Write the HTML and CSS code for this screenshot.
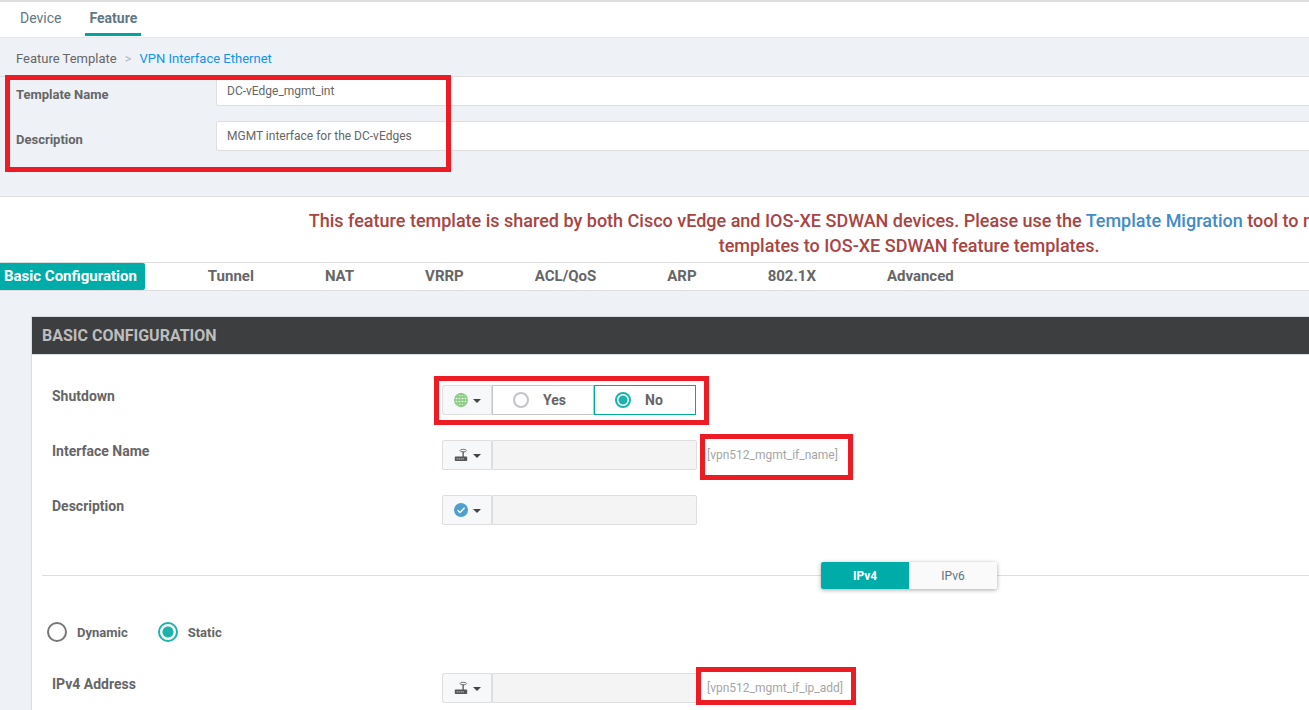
FILE: index.html
```html
<!DOCTYPE html>
<html lang="en">
<head>
<meta charset="utf-8">
<title>Feature Template - VPN Interface Ethernet</title>
<link rel="stylesheet" href="styles.css">
</head>
<body>
<svg class="sprite" aria-hidden="true">
  <symbol id="globe" viewBox="0 0 16 16"><g fill="none" stroke="currentColor" stroke-width="1.5"><circle cx="8" cy="8" r="7.2"/><ellipse cx="8" cy="8" rx="3.6" ry="7"/><path d="M8 1v14M1 8h14M2 4.6h12M2 11.4h12"/></g></symbol>
  <symbol id="router" viewBox="0 0 14 14"><path fill="currentColor" d="M1.600 8.500h6.900V3.500h1.300v5h2.600q.8 0 .8.8v3q0 .7-.8.7H1.600q-.8 0-.8-.7v-3q0-.8.8-.8z"/><ellipse cx="9.200" cy="2.600" rx="3.200" ry="1.300" fill="none" stroke="currentColor" stroke-width=".8"/><path stroke="#f8f9fa" stroke-width=".8" d="M2.600 10.900h1.200M4.600 10.900h1.200M6.600 10.900h1.200M8.600 10.900h1.200"/></symbol>
  <symbol id="check" viewBox="0 0 14 14"><circle cx="7" cy="7" r="7" fill="currentColor"/><path d="M3.600 7.200l2.400 2.300 4.600-4.800" fill="none" stroke="#fff" stroke-width="1.300"/></symbol>
</svg>
<div class="page">
  <nav class="top-tabs">
    <a class="top-tab" href="#device">Device</a>
    <a class="top-tab active" href="#feature">Feature</a>
  </nav>
  <nav class="breadcrumb">
    <a href="#templates">Feature Template</a><span class="sep">&gt;</span><a class="current" href="#vpn">VPN Interface Ethernet</a>
  </nav>
  <section class="details">
    <div class="detail-row"><label for="tname">Template Name</label><input id="tname" type="text" value="DC-vEdge_mgmt_int"></div>
    <div class="detail-row"><label for="tdesc">Description</label><input id="tdesc" type="text" value="MGMT interface for the DC-vEdges"></div>
    <div class="mark mark-details"></div>
  </section>
  <p class="notice">This feature template is shared by both Cisco vEdge and IOS-XE SDWAN devices. Please use the <a href="#migration">Template Migration</a> tool to migrate all shared feature<br>templates to IOS-XE SDWAN feature templates.</p>
  <nav class="section-tabs">
    <a class="active" href="#basic">Basic Configuration</a>
    <a href="#tunnel">Tunnel</a>
    <a href="#nat">NAT</a>
    <a href="#vrrp">VRRP</a>
    <a href="#acl">ACL/QoS</a>
    <a href="#arp">ARP</a>
    <a href="#dot1x">802.1X</a>
    <a href="#advanced">Advanced</a>
  </nav>
  <section class="panel" id="basic">
    <h2>BASIC CONFIGURATION</h2>
    <div class="row">
      <span class="row-label" id="shutdown">Shutdown</span>
      <div class="control" role="radiogroup" aria-labelledby="shutdown">
        <button class="scope green" type="button" aria-label="Shutdown scope"><svg><use href="#globe"/></svg><i class="caret"></i></button>
        <label class="option"><input type="radio" name="shutdown">Yes</label>
        <label class="option chosen"><input type="radio" name="shutdown" checked>No</label>
        <div class="mark mark-shutdown"></div>
      </div>
    </div>
    <div class="row">
      <label class="row-label" for="ifname">Interface Name</label>
      <div class="control">
        <button class="scope" type="button" aria-label="Interface name scope"><svg><use href="#router"/></svg><i class="caret"></i></button>
        <input class="field" id="ifname" type="text" disabled>
        <span class="variable">[vpn512_mgmt_if_name]</span>
        <div class="mark mark-name"></div>
      </div>
    </div>
    <div class="row">
      <label class="row-label" for="ifdesc">Description</label>
      <div class="control">
        <button class="scope blue" type="button" aria-label="Description scope"><svg><use href="#check"/></svg><i class="caret"></i></button>
        <input class="field" id="ifdesc" type="text" disabled>
      </div>
    </div>
    <div class="divider">
      <div class="ip-toggle"><button class="on" type="button">IPv4</button><button type="button">IPv6</button></div>
    </div>
    <div class="modes">
      <label><input type="radio" name="mode">Dynamic</label>
      <label><input type="radio" name="mode" checked>Static</label>
    </div>
    <div class="row">
      <label class="row-label" for="ipaddr">IPv4 Address</label>
      <div class="control">
        <button class="scope" type="button" aria-label="IPv4 address scope"><svg><use href="#router"/></svg><i class="caret"></i></button>
        <input class="field" id="ipaddr" type="text" disabled>
        <span class="variable">[vpn512_mgmt_if_ip_add]</span>
        <div class="mark mark-address"></div>
      </div>
    </div>
  </section>
</div>
</body>
</html>
```
FILE: styles.css
```css
* { box-sizing: border-box; }
html { overflow: hidden; }
body { margin: 0; background: #eef1f6; color: #666; font-family: Roboto, "Liberation Sans", sans-serif; font-size: 13px; }
a { color: inherit; text-decoration: none; }
button, input { font: inherit; color: inherit; margin: 0; }
.sprite { display: none; }

/* The form is wider than the window and runs off its right edge. */
.page { width: 138.9vw; }

.top-tabs { display: flex; gap: 20px; height: 38px; padding: 0 16px; background: #fff; border-top: 2px solid #dedede; border-bottom: 1px solid #e6e8eb; }
.top-tab { display: flex; height: 34px; padding: 0 4px; line-height: 33px; color: #5f7885; font-size: 14px; }
.top-tab.active { border-bottom: 3px solid #00a5a0; font-weight: 700; }

.breadcrumb { height: 38px; padding: 0 16px; line-height: 41px; }
.sep { margin: 0 8px; color: #b5b5b5; }
.current { color: #1094ed; }

.details { position: relative; height: 121px; border-top: 1px solid #dedede; border-bottom: 1px solid #dedede; }
.detail-row { display: flex; height: 45px; padding-left: 16px; }
.detail-row:first-child { margin-top: -1px; }
.detail-row label { width: 200px; line-height: 37px; font-weight: 700; }
.detail-row input { flex: 1; height: 30px; padding: 0 10px; border: 1px solid #dedede; border-radius: 2px; background: #fff; font-size: 12px; }

.mark { position: absolute; border: 5px solid #ed1c24; pointer-events: none; }
.mark-details { left: 5px; top: -2px; width: 446px; height: 97px; }
.mark-shutdown { left: -8px; top: -9px; width: 275px; height: 49px; }
.mark-name { left: 258px; top: -6px; width: 153px; height: 46px; }
.mark-address { left: 254px; top: -6px; width: 160px; height: 38px; }

.notice { margin: 0; padding: 11px 0 4px; background: #fff; color: #a94442; font-size: 18px; font-weight: 500; line-height: 25px; text-align: center; white-space: nowrap; }
.notice a { color: #428bca; }

.section-tabs { display: flex; gap: 55px; height: 29px; background: #fff; border-top: 1px solid #dedede; border-bottom: 1px solid #dedede; font-size: 15px; font-weight: 700; line-height: 26px; }
.section-tabs a { padding: 0 8px; }
.section-tabs .active { padding-left: 4px; background: #00aca8; border-radius: 0 2px 2px 0; color: #fff; }

.panel { margin: 25px 31px 0; border: 1px solid #d9dce0; background: #fff; }
.panel h2 { margin: 0 0 30px; padding: 0 10px; background: #3d3e40; border-bottom: 1px solid #d9dce0; color: #bdbdbd; font-size: 16px; line-height: 37px; font-weight: 700; }
.row { display: flex; height: 30px; margin-bottom: 25px; padding-left: 20px; }
.row-label { width: 390px; font-size: 14px; font-weight: 700; line-height: 23px; }
.control { position: relative; display: flex; height: 30px; }
.scope { display: flex; align-items: center; justify-content: center; gap: 5px; width: 50px; height: 30px; padding: 0; border: 1px solid #dedede; border-radius: 2px 0 0 2px; background: #f7f8fa; color: #555; }
.scope svg { width: 14px; height: 14px; }
.scope.green { color: #83c97c; }
.scope.blue { color: #519fd0; }
.caret { border: 4px solid transparent; border-top-color: #444; border-bottom-width: 0; margin-top: 2px; }
.field { width: 205px; height: 30px; border: 1px solid #dedede; border-radius: 0 2px 2px 0; background: #f4f4f4; }
.variable { padding-left: 10px; color: #a5a5a5; font-size: 12px; line-height: 30px; }

.option { display: flex; align-items: center; gap: 14px; width: 102px; height: 30px; padding-left: 20px; border: 1px solid #c6c6c9; font-size: 14px; font-weight: 700; }
.option.chosen { border-color: #00a9a4; }
input[type="radio"] { appearance: none; width: 16px; height: 16px; border: 2px solid #c2c3c8; border-radius: 50%; background: #fff; }
input[type="radio"]:checked { border-color: #1cb3ae; background: radial-gradient(circle, #1cb3ae 4px, #fff 5px); }

.divider { display: flex; align-items: center; justify-content: center; height: 27px; margin: 37px 10px 30px; background: linear-gradient(#dedede, #dedede) center / 100% 1px no-repeat; }
.ip-toggle { display: flex; border-radius: 2px; box-shadow: 0 1px 4px rgba(0, 0, 0, .35); }
.ip-toggle button { width: 88px; height: 27px; padding: 0; border: 0; border-radius: 0 2px 2px 0; background: #fafafa; color: #607380; font-size: 12px; }
.ip-toggle .on { border-radius: 2px 0 0 2px; background: #00aca8; color: #fff; font-weight: 700; }

.modes { display: flex; gap: 30px; height: 26px; margin-bottom: 28px; padding-left: 15px; font-weight: 700; }
.modes label { display: flex; align-items: center; gap: 10px; }
.modes input[type="radio"] { width: 20px; height: 20px; border-color: #777; }
.modes input[type="radio"]:checked { border-color: #1cb3ae; background: radial-gradient(circle, #1cb3ae 5px, #fff 6px); }
```
